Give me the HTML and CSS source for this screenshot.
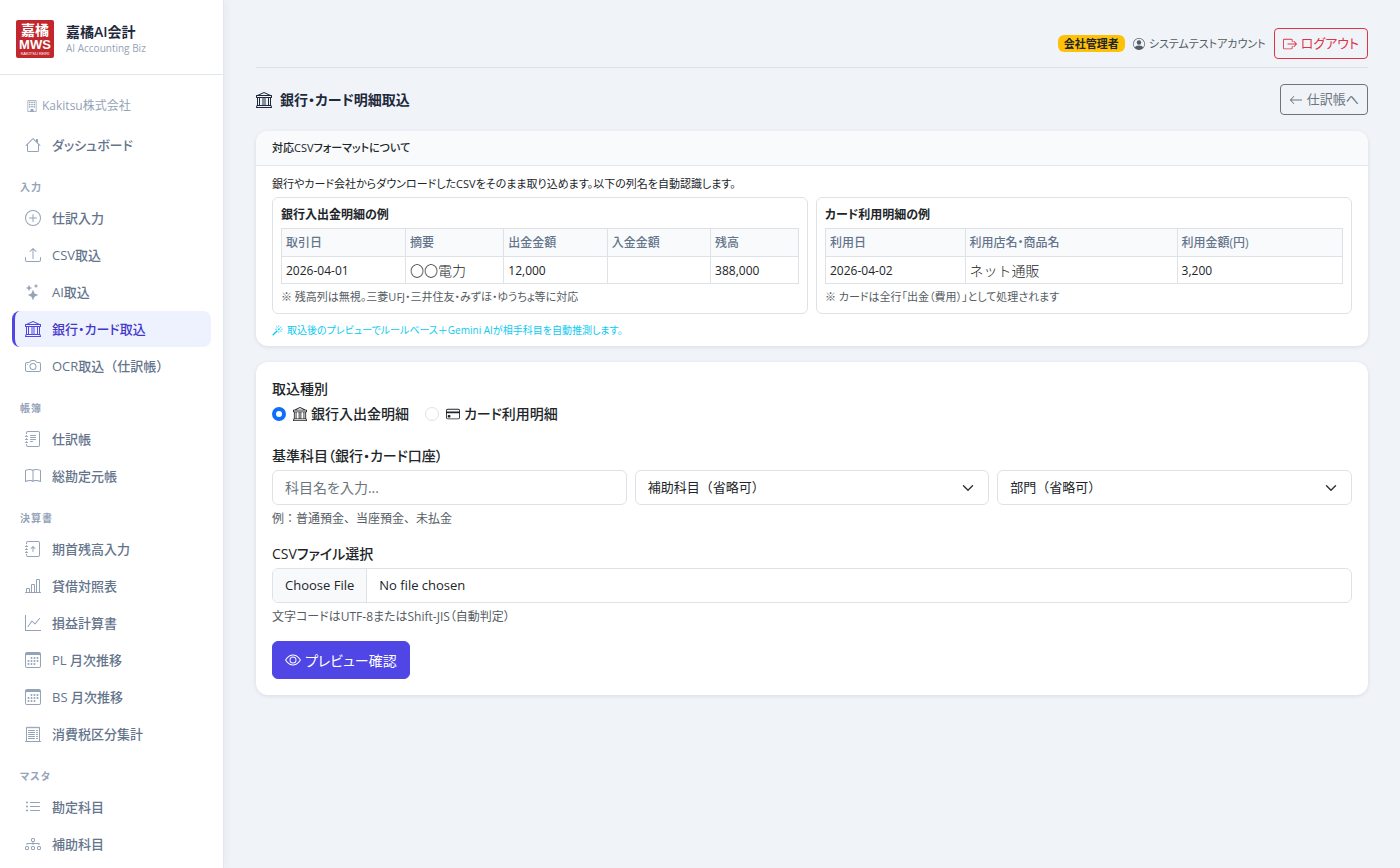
FILE: index.html
```html
<!DOCTYPE html>
<html lang="ja">
<head>
  <meta charset="UTF-8">
  <meta name="viewport" content="width=device-width, initial-scale=1">
  <title>銀行・カード明細取込</title>
  <link rel="stylesheet" href="styles.css">
</head>
<body>
  <svg class="sprite" aria-hidden="true">
    <symbol id="building" viewBox="0 0 16 16"><path d="M4 2.5a.5.5 0 0 1 .5-.5h1a.5.5 0 0 1 .5.5v1a.5.5 0 0 1-.5.5h-1a.5.5 0 0 1-.5-.5zm3 0a.5.5 0 0 1 .5-.5h1a.5.5 0 0 1 .5.5v1a.5.5 0 0 1-.5.5h-1a.5.5 0 0 1-.5-.5zm3.5-.5a.5.5 0 0 0-.5.5v1a.5.5 0 0 0 .5.5h1a.5.5 0 0 0 .5-.5v-1a.5.5 0 0 0-.5-.5zM4 5.5a.5.5 0 0 1 .5-.5h1a.5.5 0 0 1 .5.5v1a.5.5 0 0 1-.5.5h-1a.5.5 0 0 1-.5-.5zM7.5 5a.5.5 0 0 0-.5.5v1a.5.5 0 0 0 .5.5h1a.5.5 0 0 0 .5-.5v-1a.5.5 0 0 0-.5-.5zm2.500.5a.5.5 0 0 1 .5-.5h1a.5.5 0 0 1 .5.5v1a.5.5 0 0 1-.5.5h-1a.5.5 0 0 1-.5-.5zM4.500 8a.5.5 0 0 0-.5.5v1a.5.5 0 0 0 .5.5h1a.5.5 0 0 0 .5-.5v-1a.5.5 0 0 0-.5-.5zm2.500.5a.5.5 0 0 1 .5-.5h1a.5.5 0 0 1 .5.5v1a.5.5 0 0 1-.5.5h-1a.5.5 0 0 1-.5-.5zm3.500-.5a.5.5 0 0 0-.5.5v1a.5.5 0 0 0 .5.5h1a.5.5 0 0 0 .5-.5v-1a.5.5 0 0 0-.5-.5z"/><path d="M2 1a1 1 0 0 1 1-1h10a1 1 0 0 1 1 1v14a1 1 0 0 1-1 1H3a1 1 0 0 1-1-1zm11 0H3v14h3v-2.500a.5.5 0 0 1 .5-.5h3a.5.5 0 0 1 .5.5V15h3z"/></symbol>
    <symbol id="house" viewBox="0 0 16 16"><path d="M8.707 1.5a1 1 0 0 0-1.414 0L.646 8.146a.5.5 0 0 0 .708.708L2 8.207V13.5A1.5 1.5 0 0 0 3.500 15h9a1.500 1.500 0 0 0 1.500-1.500V8.207l.646.647a.5.5 0 0 0 .708-.708L13 5.793V2.500a.5.5 0 0 0-.5-.5h-1a.5.5 0 0 0-.5.5v1.293zM13 7.207V13.5a.5.5 0 0 1-.5.5h-9a.5.5 0 0 1-.5-.5V7.207l5-5z"/></symbol>
    <symbol id="plus-circle" viewBox="0 0 16 16"><path d="M8 15A7 7 0 1 1 8 1a7 7 0 0 1 0 14m0 1A8 8 0 1 0 8 0a8 8 0 0 0 0 16"/><path d="M8 4a.5.5 0 0 1 .5.5v3h3a.5.5 0 0 1 0 1h-3v3a.5.5 0 0 1-1 0v-3h-3a.5.5 0 0 1 0-1h3v-3A.5.5 0 0 1 8 4"/></symbol>
    <symbol id="upload" viewBox="0 0 16 16"><path d="M.5 9.900a.5.5 0 0 1 .5.5v2.500a1 1 0 0 0 1 1h12a1 1 0 0 0 1-1v-2.500a.5.5 0 0 1 1 0v2.500a2 2 0 0 1-2 2H2a2 2 0 0 1-2-2v-2.500a.5.5 0 0 1 .5-.5"/><path d="M7.646 1.146a.5.5 0 0 1 .708 0l3 3a.5.5 0 0 1-.708.708L8.500 2.707V11.500a.5.5 0 0 1-1 0V2.707L5.354 4.854a.5.5 0 1 1-.708-.708z"/></symbol>
    <symbol id="stars" viewBox="0 0 16 16"><path d="M7.657 6.247c.11-.33.576-.33.686 0l.645 1.937a2.890 2.890 0 0 0 1.829 1.828l1.936.645c.33.11.33.576 0 .686l-1.937.645a2.890 2.890 0 0 0-1.828 1.829l-.645 1.936a.361.361 0 0 1-.686 0l-.645-1.937a2.890 2.890 0 0 0-1.828-1.828l-1.937-.645a.361.361 0 0 1 0-.686l1.937-.645a2.890 2.890 0 0 0 1.828-1.828zM3.794 1.148a.217.217 0 0 1 .412 0l.387 1.162c.173.518.579.924 1.097 1.097l1.162.387a.217.217 0 0 1 0 .412l-1.162.387A1.730 1.730 0 0 0 4.593 5.690l-.387 1.162a.217.217 0 0 1-.412 0L3.407 5.690A1.730 1.730 0 0 0 2.310 4.593l-1.162-.387a.217.217 0 0 1 0-.412l1.162-.387A1.730 1.730 0 0 0 3.407 2.310zM10.863.099a.145.145 0 0 1 .274 0l.258.774c.115.346.386.617.732.732l.774.258a.145.145 0 0 1 0 .274l-.774.258a1.160 1.160 0 0 0-.732.732l-.258.774a.145.145 0 0 1-.274 0l-.258-.774a1.160 1.160 0 0 0-.732-.732L9.100 2.137a.145.145 0 0 1 0-.274l.774-.258c.346-.115.617-.386.732-.732z"/></symbol>
    <symbol id="bank" viewBox="0 0 16 16"><path d="m8 0 6.610 3h.890a.5.5 0 0 1 .5.5v2a.5.5 0 0 1-.5.5H15v7a.5.5 0 0 1 .485.380l.5 2a.498.498 0 0 1-.485.620H.5a.498.498 0 0 1-.485-.620l.5-2A.5.5 0 0 1 1 13V6H.5a.5.5 0 0 1-.5-.5v-2A.5.5 0 0 1 .5 3h.890zM3.777 3h8.447L8 1zM2 6v7h1V6zm2 0v7h2.500V6zm3.500 0v7h1V6zm2 0v7H12V6zM13 6v7h1V6zm2-1V4H1v1zm-.390 9H1.390l-.250 1h13.720z"/></symbol>
    <symbol id="camera" viewBox="0 0 16 16"><path d="M15 12a1 1 0 0 1-1 1H2a1 1 0 0 1-1-1V6a1 1 0 0 1 1-1h1.172a3 3 0 0 0 2.120-.879l.830-.828A1 1 0 0 1 6.827 3h2.344a1 1 0 0 1 .707.293l.828.828A3 3 0 0 0 12.828 5H14a1 1 0 0 1 1 1zM2 4a2 2 0 0 0-2 2v6a2 2 0 0 0 2 2h12a2 2 0 0 0 2-2V6a2 2 0 0 0-2-2h-1.172a2 2 0 0 1-1.414-.586l-.828-.828A2 2 0 0 0 9.172 2H6.828a2 2 0 0 0-1.414.586l-.828.828A2 2 0 0 1 3.172 4z"/><path d="M8 11a2.500 2.500 0 1 1 0-5 2.500 2.500 0 0 1 0 5m0 1a3.500 3.500 0 1 0 0-7 3.500 3.500 0 0 0 0 7M3 6.500a.5.5 0 1 1-1 0 .5.5 0 0 1 1 0"/></symbol>
    <symbol id="journal" viewBox="0 0 16 16"><path d="M3 0h10a2 2 0 0 1 2 2v12a2 2 0 0 1-2 2H3a2 2 0 0 1-2-2v-1h1v1a1 1 0 0 0 1 1h10a1 1 0 0 0 1-1V2a1 1 0 0 0-1-1H3a1 1 0 0 0-1 1v1H1V2a2 2 0 0 1 2-2"/><path d="M1 5v-.5a.5.5 0 0 1 1 0V5h.5a.5.5 0 0 1 0 1h-2a.5.5 0 0 1 0-1zm0 3v-.5a.5.5 0 0 1 1 0V8h.5a.5.5 0 0 1 0 1h-2a.5.5 0 0 1 0-1zm0 3v-.5a.5.5 0 0 1 1 0v.5h.5a.5.5 0 0 1 0 1h-2a.5.5 0 0 1 0-1z"/></symbol>
    <symbol id="journal-text" viewBox="0 0 16 16"><use href="#journal"/><path d="M5 10.500a.5.5 0 0 1 .5-.5h2a.5.5 0 0 1 0 1h-2a.5.5 0 0 1-.5-.5m0-2a.5.5 0 0 1 .5-.5h5a.5.5 0 0 1 0 1h-5a.5.5 0 0 1-.5-.5m0-2a.5.5 0 0 1 .5-.5h5a.5.5 0 0 1 0 1h-5a.5.5 0 0 1-.5-.5m0-2a.5.5 0 0 1 .5-.5h5a.5.5 0 0 1 0 1h-5a.5.5 0 0 1-.5-.5"/></symbol>
    <symbol id="journal-arrow-up" viewBox="0 0 16 16"><use href="#journal"/><path fill-rule="evenodd" d="M8 11a.5.5 0 0 0 .5-.5V6.707l1.146 1.147a.5.5 0 0 0 .708-.708l-2-2a.5.5 0 0 0-.708 0l-2 2a.5.5 0 1 0 .708.708L7.500 6.707V10.500a.5.5 0 0 0 .5.5"/></symbol>
    <symbol id="book" viewBox="0 0 16 16"><path d="M1 2.828c.885-.370 2.154-.769 3.388-.893 1.330-.134 2.458.063 3.112.752v9.746c-.935-.530-2.120-.603-3.213-.493-1.180.120-2.370.461-3.287.811zm7.500-.141c.654-.689 1.782-.886 3.112-.752 1.234.124 2.503.523 3.388.893v9.923c-.918-.350-2.107-.692-3.287-.810-1.094-.111-2.278-.039-3.213.492zM8 1.783C7.015.936 5.587.810 4.287.940c-1.514.153-3.042.672-3.994 1.105A.5.5 0 0 0 0 2.500v11a.5.5 0 0 0 .707.455c.882-.400 2.303-.881 3.680-1.020 1.409-.142 2.590.087 3.223.877a.5.5 0 0 0 .780 0c.633-.790 1.814-1.019 3.222-.877 1.378.139 2.800.620 3.681 1.020A.5.5 0 0 0 16 13.500v-11a.5.5 0 0 0-.293-.455c-.952-.433-2.480-.952-3.994-1.105C10.413.809 8.985.936 8 1.783"/></symbol>
    <symbol id="bar-chart" viewBox="0 0 16 16"><path d="M11 2a1 1 0 0 1 1-1h2a1 1 0 0 1 1 1v12h.5a.5.5 0 0 1 0 1H.5a.5.5 0 0 1 0-1H1v-3a1 1 0 0 1 1-1h2a1 1 0 0 1 1 1v3h1V7a1 1 0 0 1 1-1h2a1 1 0 0 1 1 1v7h1zm1 12h2V2h-2zm-3 0V7H7v7zm-5 0v-3H2v3z"/></symbol>
    <symbol id="graph-up" viewBox="0 0 16 16"><path fill-rule="evenodd" d="M0 0h1v15h15v1H0zm14.817 3.113a.5.5 0 0 1 .070.704l-4.500 5.500a.5.5 0 0 1-.740.037L7.060 6.767l-3.656 5.027a.5.5 0 0 1-.808-.588l4-5.500a.5.5 0 0 1 .758-.060l2.609 2.610 4.150-5.073a.5.5 0 0 1 .704-.070"/></symbol>
    <symbol id="calendar" viewBox="0 0 16 16"><path d="M14 0H2a2 2 0 0 0-2 2v12a2 2 0 0 0 2 2h12a2 2 0 0 0 2-2V2a2 2 0 0 0-2-2M1 3.857C1 3.384 1.448 3 2 3h12c.552 0 1 .384 1 .857v10.286c0 .473-.448.857-1 .857H2c-.552 0-1-.384-1-.857z"/><path d="M6.500 7a1 1 0 1 0 0-2 1 1 0 0 0 0 2m3 0a1 1 0 1 0 0-2 1 1 0 0 0 0 2m3 0a1 1 0 1 0 0-2 1 1 0 0 0 0 2m-9 3a1 1 0 1 0 0-2 1 1 0 0 0 0 2m3 0a1 1 0 1 0 0-2 1 1 0 0 0 0 2m3 0a1 1 0 1 0 0-2 1 1 0 0 0 0 2m3 0a1 1 0 1 0 0-2 1 1 0 0 0 0 2m-9 3a1 1 0 1 0 0-2 1 1 0 0 0 0 2m3 0a1 1 0 1 0 0-2 1 1 0 0 0 0 2m3 0a1 1 0 1 0 0-2 1 1 0 0 0 0 2"/></symbol>
    <symbol id="receipt" viewBox="0 0 16 16"><path d="M3 4.500a.5.5 0 0 1 .5-.5h6a.5.5 0 1 1 0 1h-6a.5.5 0 0 1-.5-.5m0 2a.5.5 0 0 1 .5-.5h6a.5.5 0 1 1 0 1h-6a.5.5 0 0 1-.5-.5m0 2a.5.5 0 0 1 .5-.5h6a.5.5 0 1 1 0 1h-6a.5.5 0 0 1-.5-.5m0 2a.5.5 0 0 1 .5-.5h6a.5.5 0 0 1 0 1h-6a.5.5 0 0 1-.5-.5m0 2a.5.5 0 0 1 .5-.5h6a.5.5 0 0 1 0 1h-6a.5.5 0 0 1-.5-.5M11.500 4a.5.5 0 0 0 0 1h1a.5.5 0 0 0 0-1zm0 2a.5.5 0 0 0 0 1h1a.5.5 0 0 0 0-1zm0 2a.5.5 0 0 0 0 1h1a.5.5 0 0 0 0-1zm0 2a.5.5 0 0 0 0 1h1a.5.5 0 0 0 0-1zm0 2a.5.5 0 0 0 0 1h1a.5.5 0 0 0 0-1z"/><path d="M2.354.646a.5.5 0 0 0-.801.130l-.5 1A.5.5 0 0 0 1 2v13H.5a.5.5 0 0 0 0 1h15a.5.5 0 0 0 0-1H15V2a.5.5 0 0 0-.053-.224l-.5-1a.5.5 0 0 0-.800-.130L13 1.293l-.646-.647a.5.5 0 0 0-.708 0L11 1.293l-.646-.647a.5.5 0 0 0-.708 0L9 1.293 8.354.646a.5.5 0 0 0-.708 0L7 1.293 6.354.646a.5.5 0 0 0-.708 0L5 1.293 4.354.646a.5.5 0 0 0-.708 0L3 1.293zm-.217 1.198.510.510a.5.5 0 0 0 .707 0L4 1.707l.646.647a.5.5 0 0 0 .708 0L6 1.707l.646.647a.5.5 0 0 0 .708 0L8 1.707l.646.647a.5.5 0 0 0 .708 0L10 1.707l.646.647a.5.5 0 0 0 .708 0L12 1.707l.646.647a.5.5 0 0 0 .708 0l.509-.510.137.274V15H2V2.118z"/></symbol>
    <symbol id="list" viewBox="0 0 16 16"><path fill-rule="evenodd" d="M5 11.500a.5.5 0 0 1 .5-.5h9a.5.5 0 0 1 0 1h-9a.5.5 0 0 1-.5-.5m0-4a.5.5 0 0 1 .5-.5h9a.5.5 0 0 1 0 1h-9a.5.5 0 0 1-.5-.5m0-4a.5.5 0 0 1 .5-.5h9a.5.5 0 0 1 0 1h-9a.5.5 0 0 1-.5-.5m-3 1a1 1 0 1 0 0-2 1 1 0 0 0 0 2m0 4a1 1 0 1 0 0-2 1 1 0 0 0 0 2m0 4a1 1 0 1 0 0-2 1 1 0 0 0 0 2"/></symbol>
    <symbol id="diagram" viewBox="0 0 16 16"><path fill-rule="evenodd" d="M6 3.500A1.500 1.500 0 0 1 7.500 2h1A1.500 1.500 0 0 1 10 3.500v1A1.500 1.500 0 0 1 8.500 6v1H14a.5.5 0 0 1 .5.5v1a.5.5 0 0 1-1 0V8h-5v.5a.5.5 0 0 1-1 0V8h-5v.5a.5.5 0 0 1-1 0v-1A.5.5 0 0 1 2 7h5.500V6A1.500 1.500 0 0 1 6 4.500zM8.500 5a.5.5 0 0 0 .5-.5v-1a.5.5 0 0 0-.5-.5h-1a.5.5 0 0 0-.5.5v1a.5.5 0 0 0 .5.5zM0 11.500A1.500 1.500 0 0 1 1.500 10h1A1.500 1.500 0 0 1 4 11.500v1A1.500 1.500 0 0 1 2.500 14h-1A1.500 1.500 0 0 1 0 12.500zm1.500-.5a.5.5 0 0 0-.5.5v1a.5.5 0 0 0 .5.5h1a.5.5 0 0 0 .5-.5v-1a.5.5 0 0 0-.5-.5zm4.500.5A1.500 1.500 0 0 1 7.500 10h1a1.500 1.500 0 0 1 1.500 1.500v1A1.500 1.500 0 0 1 8.500 14h-1A1.500 1.500 0 0 1 6 12.500zm1.500-.5a.5.5 0 0 0-.5.5v1a.5.5 0 0 0 .5.5h1a.5.5 0 0 0 .5-.5v-1a.5.5 0 0 0-.5-.5zm4.500.5a1.500 1.500 0 0 1 1.500-1.500h1a1.500 1.500 0 0 1 1.500 1.500v1a1.500 1.500 0 0 1-1.500 1.500h-1a1.500 1.500 0 0 1-1.500-1.500zm1.500-.5a.5.5 0 0 0-.5.5v1a.5.5 0 0 0 .5.5h1a.5.5 0 0 0 .5-.5v-1a.5.5 0 0 0-.5-.5z"/></symbol>
    <symbol id="person" viewBox="0 0 16 16"><path d="M11 6a3 3 0 1 1-6 0 3 3 0 0 1 6 0"/><path fill-rule="evenodd" d="M0 8a8 8 0 1 1 16 0A8 8 0 0 1 0 8m8-7a7 7 0 0 0-5.468 11.370C3.242 11.226 4.805 10 8 10s4.757 1.225 5.468 2.370A7 7 0 0 0 8 1"/></symbol>
    <symbol id="logout" viewBox="0 0 16 16"><path fill-rule="evenodd" d="M10 12.500a.5.5 0 0 1-.5.5h-8a.5.5 0 0 1-.5-.5v-9a.5.5 0 0 1 .5-.5h8a.5.5 0 0 1 .5.5v2a.5.5 0 0 0 1 0v-2A1.500 1.500 0 0 0 9.500 2h-8A1.500 1.500 0 0 0 0 3.500v9A1.500 1.500 0 0 0 1.500 14h8a1.500 1.500 0 0 0 1.500-1.500v-2a.5.5 0 0 0-1 0z"/><path fill-rule="evenodd" d="M15.854 8.354a.5.5 0 0 0 0-.708l-3-3a.5.5 0 0 0-.708.708L14.293 7.500H5.500a.5.5 0 0 0 0 1h8.793l-2.147 2.146a.5.5 0 0 0 .708.708z"/></symbol>
    <symbol id="arrow-left" viewBox="0 0 16 16"><path fill-rule="evenodd" d="M15 8a.5.5 0 0 0-.5-.5H2.707l3.147-3.146a.5.5 0 1 0-.708-.708l-4 4a.5.5 0 0 0 0 .708l4 4a.5.5 0 0 0 .708-.708L2.707 8.500H14.500A.5.5 0 0 0 15 8"/></symbol>
    <symbol id="magic" viewBox="0 0 16 16"><path d="M9.500 2.672a.5.5 0 1 0 1 0V.843a.5.5 0 0 0-1 0zm4.500.035A.5.5 0 0 0 13.293 2L12 3.293a.5.5 0 1 0 .707.707zM7.293 4A.5.5 0 1 0 8 3.293L6.707 2A.5.5 0 0 0 6 2.707zm-.621 2.500a.5.5 0 1 0 0-1H4.843a.5.5 0 1 0 0 1zm8.485 0a.5.5 0 1 0 0-1h-1.829a.5.5 0 0 0 0 1zM13.293 10A.5.5 0 1 0 14 9.293L12.707 8a.5.5 0 1 0-.707.707zM9.500 11.157a.5.5 0 0 0 1 0V9.328a.5.5 0 0 0-1 0zm1.854-5.097a.5.5 0 0 0 0-.706l-.708-.708a.5.5 0 0 0-.707 0L8.646 5.940a.5.5 0 0 0 0 .707l.708.708a.5.5 0 0 0 .707 0l1.293-1.293Zm-3 3a.5.5 0 0 0 0-.706l-.708-.708a.5.5 0 0 0-.707 0L.646 13.940a.5.5 0 0 0 0 .707l.707.707a.5.5 0 0 0 .707 0z"/></symbol>
    <symbol id="credit-card" viewBox="0 0 16 16"><path d="M0 4a2 2 0 0 1 2-2h12a2 2 0 0 1 2 2v8a2 2 0 0 1-2 2H2a2 2 0 0 1-2-2zm2-1a1 1 0 0 0-1 1v1h14V4a1 1 0 0 0-1-1zm13 4H1v5a1 1 0 0 0 1 1h12a1 1 0 0 0 1-1z"/><path d="M2 10a1 1 0 0 1 1-1h1a1 1 0 0 1 1 1v1a1 1 0 0 1-1 1H3a1 1 0 0 1-1-1z"/></symbol>
    <symbol id="eye" viewBox="0 0 16 16"><path d="M16 8s-3-5.500-8-5.500S0 8 0 8s3 5.500 8 5.500S16 8 16 8M1.173 8a13 13 0 0 1 1.660-2.043C4.120 4.668 5.880 3.500 8 3.500s3.879 1.168 5.168 2.457A13 13 0 0 1 14.828 8q-.086.130-.195.288c-.335.480-.830 1.120-1.465 1.755C11.879 11.332 10.119 12.500 8 12.500s-3.879-1.168-5.168-2.457A13 13 0 0 1 1.172 8z"/><path d="M8 5.500a2.500 2.500 0 1 0 0 5 2.500 2.500 0 0 0 0-5M4.500 8a3.500 3.500 0 1 1 7 0 3.500 3.500 0 0 1-7 0"/></symbol>
  </svg>

  <div class="layout">
    <aside class="sidebar">
      <div class="brand">
        <svg class="brand-logo" viewBox="0 0 38 38" role="img" aria-label="MWS">
          <rect width="38" height="38" rx="2"/>
          <text class="logo-kanji" x="19" y="15" text-anchor="middle">嘉橘</text>
          <text class="logo-mws" x="19" y="29" text-anchor="middle">MWS</text>
          <text class="logo-sub" x="19" y="35" text-anchor="middle">KAKITSU KEIRI</text>
        </svg>
        <div>
          <div class="brand-name">嘉橘AI会計</div>
          <div class="brand-sub">AI Accounting Biz</div>
        </div>
      </div>

      <nav class="nav">
        <div class="company"><svg class="icon"><use href="#building"/></svg>Kakitsu株式会社</div>
        <a class="nav-link" href="#"><svg class="icon"><use href="#house"/></svg>ダッシュボード</a>

        <div class="nav-section">入力</div>
        <a class="nav-link" href="#"><svg class="icon"><use href="#plus-circle"/></svg>仕訳入力</a>
        <a class="nav-link" href="#"><svg class="icon"><use href="#upload"/></svg>CSV取込</a>
        <a class="nav-link" href="#"><svg class="icon"><use href="#stars"/></svg>AI取込</a>
        <a class="nav-link active" href="#"><svg class="icon"><use href="#bank"/></svg>銀行・カード取込</a>
        <a class="nav-link full-width" href="#"><svg class="icon"><use href="#camera"/></svg>OCR取込（仕訳帳）</a>

        <div class="nav-section">帳簿</div>
        <a class="nav-link" href="#"><svg class="icon"><use href="#journal-text"/></svg>仕訳帳</a>
        <a class="nav-link" href="#"><svg class="icon"><use href="#book"/></svg>総勘定元帳</a>

        <div class="nav-section">決算書</div>
        <a class="nav-link" href="#"><svg class="icon"><use href="#journal-arrow-up"/></svg>期首残高入力</a>
        <a class="nav-link" href="#"><svg class="icon"><use href="#bar-chart"/></svg>貸借対照表</a>
        <a class="nav-link" href="#"><svg class="icon"><use href="#graph-up"/></svg>損益計算書</a>
        <a class="nav-link" href="#"><svg class="icon"><use href="#calendar"/></svg>PL 月次推移</a>
        <a class="nav-link" href="#"><svg class="icon"><use href="#calendar"/></svg>BS 月次推移</a>
        <a class="nav-link" href="#"><svg class="icon"><use href="#receipt"/></svg>消費税区分集計</a>

        <div class="nav-section">マスタ</div>
        <a class="nav-link" href="#"><svg class="icon"><use href="#list"/></svg>勘定科目</a>
        <a class="nav-link" href="#"><svg class="icon"><use href="#diagram"/></svg>補助科目</a>
      </nav>
    </aside>

    <main class="main">
      <header class="topbar">
        <span class="badge">会社管理者</span>
        <span class="user"><svg class="icon"><use href="#person"/></svg>システムテストアカウント</span>
        <button type="button" class="btn btn-danger"><svg class="icon"><use href="#logout"/></svg>ログアウト</button>
      </header>

      <div class="page-head">
        <h1><svg class="icon"><use href="#bank"/></svg>銀行・カード明細取込</h1>
        <a class="btn btn-secondary" href="#"><svg class="icon"><use href="#arrow-left"/></svg>仕訳帳へ</a>
      </div>

      <section class="card">
        <h2 class="card-header">対応CSVフォーマットについて</h2>
        <div class="format-body">
          <p class="lead">銀行やカード会社からダウンロードしたCSVをそのまま取り込めます。以下の列名を自動認識します。</p>
          <div class="samples">
            <div class="sample">
              <h3>銀行入出金明細の例</h3>
              <table>
                <colgroup><col class="w24"><col class="w19"><col class="w20"><col class="w20"><col class="w17"></colgroup>
                <thead>
                  <tr><th>取引日</th><th>摘要</th><th>出金金額</th><th>入金金額</th><th>残高</th></tr>
                </thead>
                <tbody>
                  <tr><td>2026-04-01</td><td class="desc">〇〇電力</td><td>12,000</td><td></td><td>388,000</td></tr>
                </tbody>
              </table>
              <p class="note">※ 残高列は無視。三菱UFJ・三井住友・みずほ・ゆうちょ等に対応</p>
            </div>
            <div class="sample">
              <h3>カード利用明細の例</h3>
              <table>
                <colgroup><col class="w27"><col class="w41"><col class="w32"></colgroup>
                <thead>
                  <tr><th>利用日</th><th>利用店名・商品名</th><th>利用金額(円)</th></tr>
                </thead>
                <tbody>
                  <tr><td>2026-04-02</td><td class="desc">ネット通販</td><td>3,200</td></tr>
                </tbody>
              </table>
              <p class="note">※ カードは全行「出金（費用）」として処理されます</p>
            </div>
          </div>
          <p class="ai-note"><svg class="icon"><use href="#magic"/></svg>取込後のプレビューでルールベース＋Gemini AIが相手科目を自動推測します。</p>
        </div>
      </section>

      <form class="card import-form">
        <fieldset>
          <legend>取込種別</legend>
          <div class="radios">
            <label><input type="radio" name="kind" value="bank" checked><svg class="icon"><use href="#bank"/></svg>銀行入出金明細</label>
            <label><input type="radio" name="kind" value="card"><svg class="icon"><use href="#credit-card"/></svg>カード利用明細</label>
          </div>
        </fieldset>

        <div class="field">
          <label class="field-label" for="account">基準科目（銀行・カード口座）</label>
          <div class="field-row">
            <input type="text" id="account" class="control" placeholder="科目名を入力...">
            <select class="control full-width" aria-label="補助科目"><option>補助科目（省略可）</option></select>
            <select class="control full-width" aria-label="部門"><option>部門（省略可）</option></select>
          </div>
          <p class="hint full-width">例：普通預金、当座預金、未払金</p>
        </div>

        <div class="field">
          <label class="field-label" for="csv">CSVファイル選択</label>
          <input type="file" id="csv" class="control" accept=".csv">
          <p class="hint">文字コードはUTF-8またはShift-JIS（自動判定）</p>
        </div>

        <button type="submit" class="btn btn-primary"><svg class="icon"><use href="#eye"/></svg>プレビュー確認</button>
      </form>
    </main>
  </div>
</body>
</html>
```

FILE: styles.css
```css
* {
  box-sizing: border-box;
}

body {
  margin: 0;
  background: #f0f4f9;
  color: #212529;
  font-family: "Open Sans", "Noto Sans CJK JP", sans-serif;
  font-feature-settings: "palt";
  font-size: 14px;
  line-height: 21px;
}

h1, h2, h3, p {
  margin: 0;
}

a {
  text-decoration: none;
}

button, input, select {
  font: inherit;
  font-feature-settings: inherit;
  color: inherit;
}

.sprite {
  display: none;
}

.full-width {
  font-feature-settings: normal;
}

.icon {
  width: 14px;
  height: 14px;
  flex: none;
  fill: currentColor;
}

.layout {
  display: flex;
  height: 100vh;
}

/* sidebar */
.sidebar {
  width: 224px;
  flex: none;
  overflow: hidden;
  background: #fff;
  border-right: 1px solid #e2e8f0;
  box-shadow: 2px 0 8px rgba(15, 23, 42, 0.04);
}

.brand {
  display: flex;
  align-items: center;
  gap: 12px;
  padding: 20px 16px 16px;
  border-bottom: 1px solid #e2e8f0;
}

.brand-logo {
  width: 38px;
  height: 38px;
  flex: none;
  overflow: visible;
  fill: #fff;
}

.brand-logo rect {
  fill: #c1272d;
}

.logo-kanji {
  font: 700 14px "Noto Sans CJK JP", sans-serif;
}

.logo-mws {
  font: 700 13px "Liberation Sans", sans-serif;
}

.logo-sub {
  font: 400 4px "Liberation Sans", sans-serif;
}

.brand-name {
  color: #1e293b;
  font-size: 14px;
  font-weight: 600;
  line-height: 18px;
}

.brand-sub {
  color: #94a3b8;
  font-size: 10px;
  line-height: 14px;
}

.nav {
  padding: 12px;
}

.company {
  display: flex;
  align-items: center;
  gap: 4px;
  padding: 9px 14px 7px;
  margin-bottom: 4px;
  color: #94a3b8;
  font-size: 12px;
  line-height: 20px;
}

.company .icon {
  width: 12px;
  height: 12px;
}

.nav-link {
  display: flex;
  align-items: center;
  gap: 11px;
  height: 36px;
  margin-bottom: 1px;
  padding: 0 10px;
  border-left: 3px solid transparent;
  border-radius: 8px;
  color: #64748b;
  font-size: 13px;
  font-weight: 500;
}

.nav-link .icon {
  width: 16px;
  height: 16px;
  color: #94a3b8;
}

.nav-link.active {
  background: #eef2ff;
  border-left-color: #4f46e5;
  color: #4338ca;
}

.nav-link.active .icon {
  color: #4f46e5;
}

.nav-section {
  padding: 16px 8px 5px;
  color: #94a3b8;
  font-size: 10px;
  font-weight: 700;
  letter-spacing: 1px;
  line-height: 15px;
}

/* main column */
.main {
  flex: 1;
  min-width: 0;
  padding: 28px 32px;
}

.topbar {
  display: flex;
  justify-content: flex-end;
  align-items: center;
  gap: 8px;
  margin-bottom: 16px;
  padding-bottom: 8px;
  border-bottom: 1px solid #dee2e6;
}

.badge {
  padding: 0 6px;
  border-radius: 6px;
  background: #ffc107;
  font-size: 11px;
  font-weight: 700;
  line-height: 17px;
}

.user {
  display: flex;
  align-items: center;
  gap: 4px;
  color: #555c63;
  font-size: 11px;
}

.user .icon {
  width: 12px;
  height: 12px;
}

.btn {
  display: inline-flex;
  align-items: center;
  gap: 4px;
  height: 31px;
  padding: 0 8px;
  border: 1px solid;
  border-radius: 4px;
  background: transparent;
  font-size: 13px;
  cursor: pointer;
}

.btn-danger {
  color: #dc3545;
}

.btn-secondary {
  color: #6c757d;
}

.btn-primary {
  height: 38px;
  padding: 0 12px;
  border-color: #4f46e5;
  border-radius: 6px;
  background: #4f46e5;
  color: #fff;
  font-size: 14px;
}

.btn-primary .icon {
  width: 16px;
  height: 16px;
}

.page-head {
  display: flex;
  justify-content: space-between;
  align-items: center;
  margin-bottom: 16px;
}

.page-head h1 {
  display: flex;
  align-items: center;
  gap: 8px;
  color: #1e293b;
  font-size: 14px;
  font-weight: 600;
}

.page-head h1 .icon {
  width: 16px;
  height: 16px;
}

.card {
  margin-bottom: 16px;
  border-radius: 12px;
  background: #fff;
  box-shadow: 0 1px 4px rgba(15, 23, 42, 0.1);
  overflow: hidden;
}

.card-header {
  padding: 8px 16px;
  border-bottom: 1px solid #e2e8f0;
  background: #f8fafc;
  font-size: 11px;
  font-weight: 500;
  line-height: 18px;
}

.format-body {
  padding: 8px 16px;
}

.lead {
  margin-bottom: 4px;
  font-size: 11px;
  line-height: 19px;
}

.samples {
  display: grid;
  grid-template-columns: 1fr 1fr;
  gap: 8px;
}

.sample {
  padding: 8px;
  border: 1px solid #dee2e6;
  border-radius: 6px;
}

.sample h3 {
  margin-bottom: 4px;
  font-size: 12px;
  font-weight: 600;
  line-height: 18px;
}

.sample table {
  width: 100%;
  table-layout: fixed;
  border-collapse: collapse;
  font-size: 12px;
  line-height: 19px;
}

.w17 { width: 17%; }
.w19 { width: 19%; }
.w20 { width: 20%; }
.w24 { width: 24%; }
.w27 { width: 27%; }
.w32 { width: 32%; }
.w41 { width: 41%; }

.sample th, .sample td {
  height: 27px;
  padding: 3px 4px;
  border: 1px solid #dee2e6;
  text-align: left;
}

.sample th {
  height: 28px;
  background: #f8fafc;
  color: #64748b;
  font-weight: 500;
}

.sample .desc {
  font-size: 14px;
  font-weight: 300;
  font-feature-settings: normal;
}

.note {
  margin-top: 4px;
  color: #555c63;
  font-size: 11px;
  line-height: 17px;
}

.ai-note {
  display: flex;
  align-items: center;
  gap: 4px;
  margin-top: 8px;
  color: #0dcaf0;
  font-size: 10px;
  line-height: 16px;
}

.ai-note .icon {
  width: 11px;
  height: 11px;
}

/* import form */
.import-form {
  padding: 16px;
}

fieldset {
  margin: 0 0 21px;
  padding: 0;
  border: 0;
}

legend, .field-label {
  display: block;
  margin-bottom: 4px;
  padding: 0;
  font-weight: 500;
}

.radios {
  display: flex;
  gap: 16px;
}

.radios label {
  display: flex;
  align-items: center;
  gap: 4px;
  font-weight: 500;
}

.radios input {
  appearance: none;
  width: 14px;
  height: 14px;
  margin: 0 3px 0 0;
  border: 1px solid #dee2e6;
  border-radius: 50%;
  background: #fff;
}

.radios input:checked {
  border: 4px solid #0d6efd;
}

.field {
  margin-bottom: 15px;
}

.field-row {
  display: grid;
  grid-template-columns: repeat(3, 1fr);
  gap: 8px;
}

.control {
  display: block;
  width: 100%;
  height: 35px;
  padding: 0 12px;
  border: 1px solid #dee2e6;
  border-radius: 6px;
  background: #fff;
  font-size: 14px;
}

.control::placeholder {
  color: #6c757d;
  opacity: 1;
}

select.control {
  appearance: none;
  background: #fff url("data:image/svg+xml,%3Csvg xmlns='http://www.w3.org/2000/svg' viewBox='0 0 16 16'%3E%3Cpath fill='none' stroke='%23343a40' stroke-linecap='round' stroke-linejoin='round' stroke-width='2' d='m2 5 6 6 6-6'/%3E%3C/svg%3E") no-repeat right 12px center / 16px 12px;
  font-size: 13px;
}

select.full-width {
  font-feature-settings: normal;
}

input[type="file"] {
  padding: 0;
  font-size: 13px;
  line-height: 33px;
  overflow: hidden;
}

input[type="file"]::file-selector-button {
  height: 33px;
  margin: 0 12px 0 0;
  padding: 0 12px;
  border: 0;
  border-right: 1px solid #dee2e6;
  background: #f8f9fa;
  color: inherit;
  font: inherit;
}

.hint {
  margin-top: 4px;
  color: #555c63;
  font-size: 12px;
  line-height: 19px;
}
```
